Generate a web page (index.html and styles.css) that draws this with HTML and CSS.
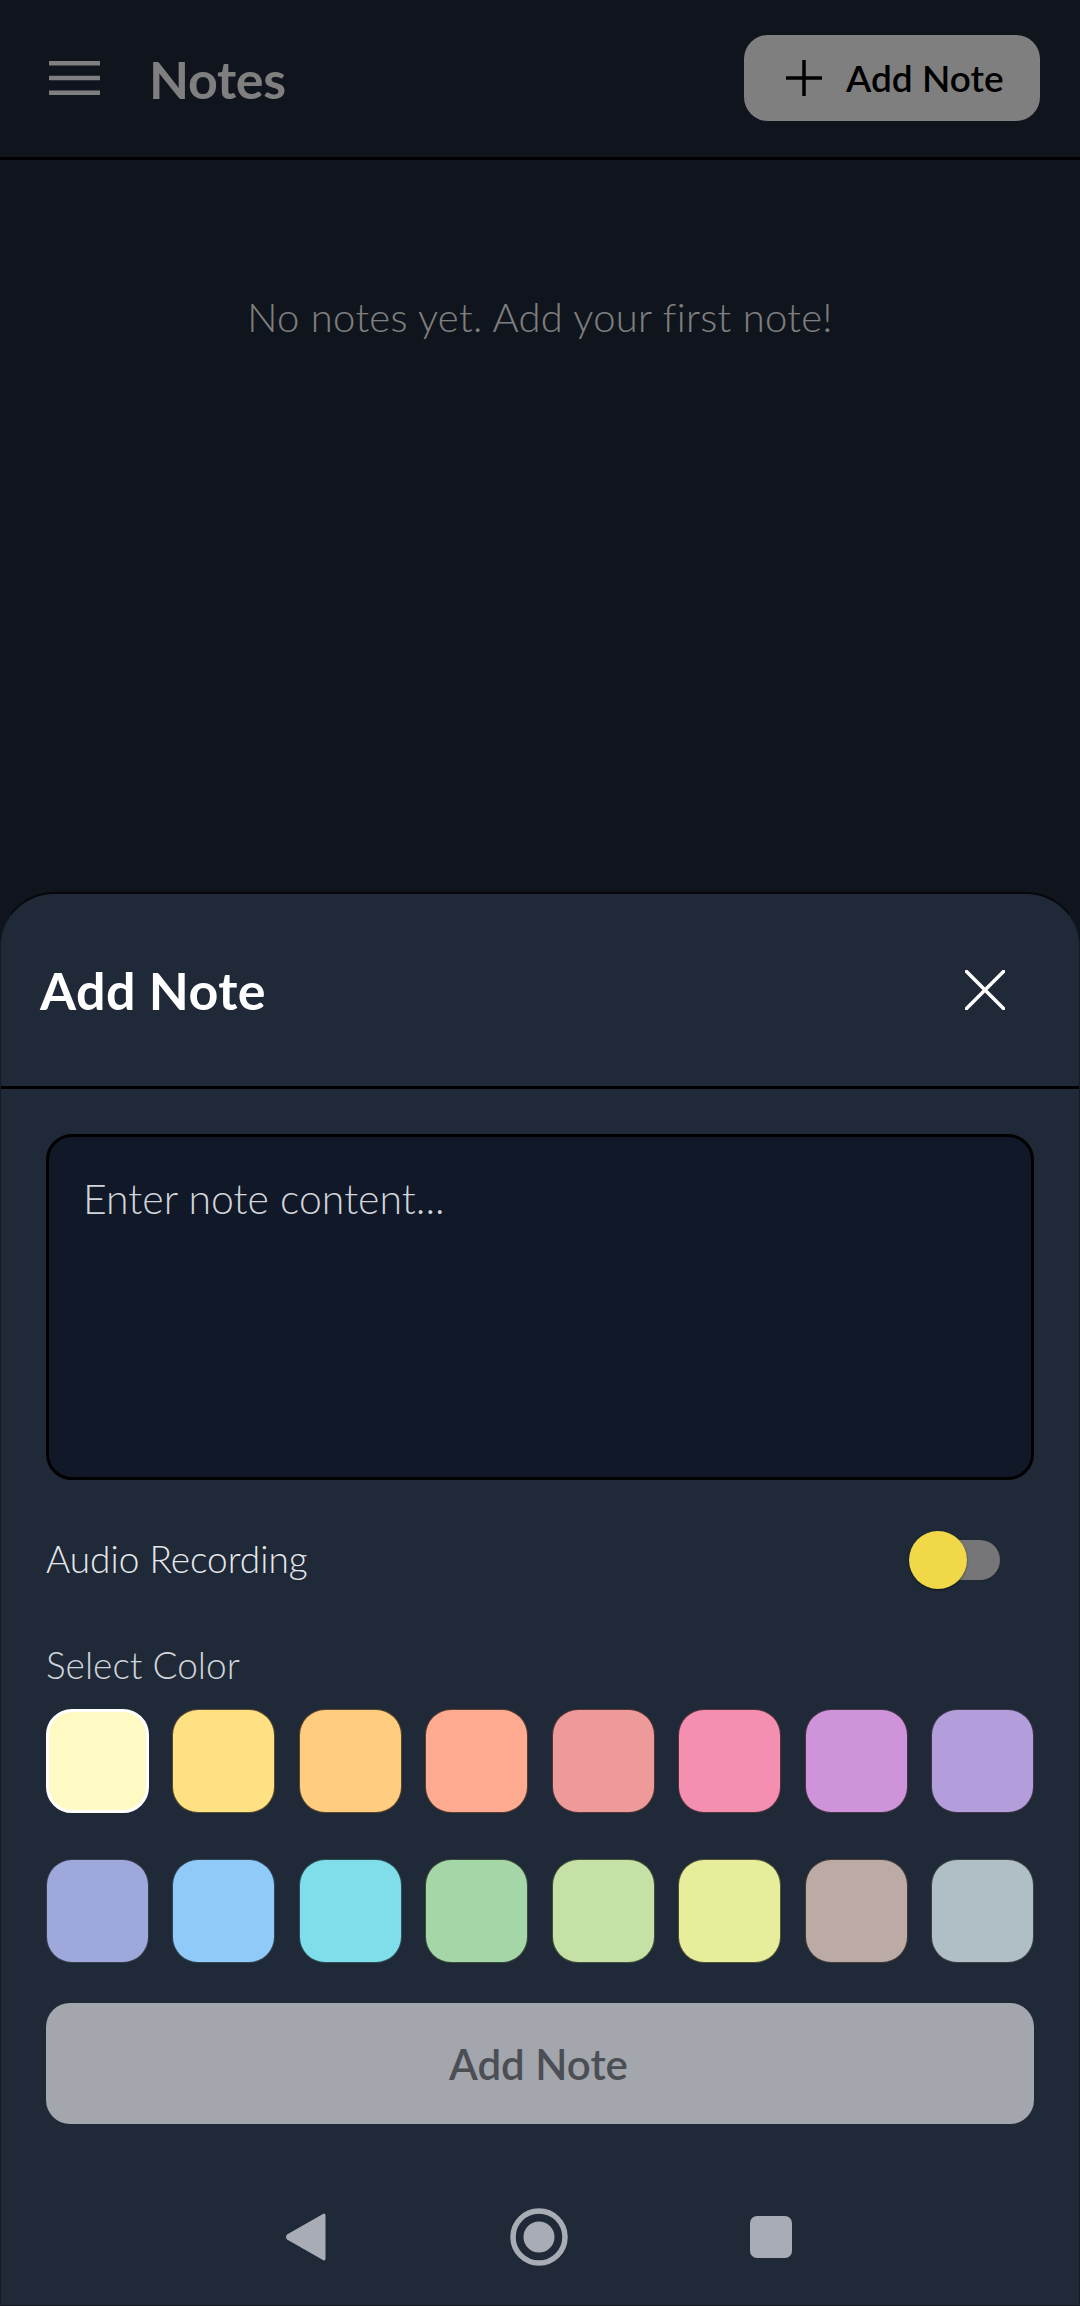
FILE: index.html
```html
<!DOCTYPE html>
<html lang="en">
<head>
<meta charset="utf-8">
<title>Notes</title>
<link rel="stylesheet" href="styles.css">
</head>
<body>
<div class="app">
  <header class="topbar">
    <div class="topbar-left">
      <svg class="menu-icon" viewBox="0 0 52 36" aria-hidden="true"><path d="M0 3h52M0 18h52M0 33h52"/></svg>
      <h1 class="title">Notes</h1>
    </div>
    <button class="add-btn">
      <svg class="plus-icon" viewBox="0 0 36 36" aria-hidden="true"><path d="M18 0v36M0 18h36"/></svg>
      <span>Add Note</span>
    </button>
  </header>
  <main class="empty"><p class="empty-text">No notes yet. Add your first note!</p></main>
  <div class="overlay"></div>
  <section class="sheet">
    <div class="sheet-head">
      <h2 class="sheet-title">Add Note</h2>
      <svg class="close-icon" viewBox="0 0 40 40" aria-hidden="true"><path d="M1.5 1.5l37 37M38.5 1.5l-37 37"/></svg>
    </div>
    <div class="sheet-body">
      <div class="textarea">Enter note content...</div>
      <div class="audio-row">
        <span class="label audio-label">Audio Recording</span>
        <span class="switch"><span class="track"></span><span class="thumb"></span></span>
      </div>
      <div class="label color-label">Select Color</div>
      <div class="swatches">
        <span class="swatch selected c1"></span><span class="swatch c2"></span><span class="swatch c3"></span><span class="swatch c4"></span>
        <span class="swatch c5"></span><span class="swatch c6"></span><span class="swatch c7"></span><span class="swatch c8"></span>
        <span class="swatch c9"></span><span class="swatch c10"></span><span class="swatch c11"></span><span class="swatch c12"></span>
        <span class="swatch c13"></span><span class="swatch c14"></span><span class="swatch c15"></span><span class="swatch c16"></span>
      </div>
      <button class="submit">Add Note</button>
    </div>
    <nav class="navbar">
      <svg class="nav-back" viewBox="0 0 40 48" aria-hidden="true"><path d="M38 0.5c1 0 1.500.8 1.500 2v43c0 1.200-.5 2-1.500 2-.6 0-1-.3-1.500-.8L1 26.500c-1.300-1.500-1.300-3.500 0-5L36.500 1.300c.5-.5.9-.8 1.500-.8z"/></svg>
      <svg class="nav-home" viewBox="0 0 58 58" aria-hidden="true"><circle class="ring" cx="29" cy="29" r="26"/><circle class="dot" cx="29" cy="29" r="15.500"/></svg>
      <span class="nav-square"></span>
    </nav>
  </section>
</div>
</body>
</html>
```
FILE: styles.css
```css
* { box-sizing: border-box; }
html, body { margin: 0; padding: 0; }
body { width: 1080px; height: 2306px; overflow: hidden; background: #202a3a; font-family: "Lato", "Liberation Sans", sans-serif; }
.app { position: relative; width: 1080px; height: 2306px; overflow: hidden; }

.topbar { height: 160px; border-bottom: 3px solid #000; display: flex; align-items: center; justify-content: space-between; padding: 0 40px 0 49px; }
.topbar-left { display: flex; align-items: center; gap: 49px; }
.menu-icon { width: 51px; height: 36px; margin-top: -2px; fill: none; stroke: #fff; stroke-width: 4.500; stroke-linecap: round; }
.title { margin: 0; font-size: 52px; line-height: 60px; font-weight: 700; letter-spacing: -.3px; color: #fff; }
.add-btn { width: 296px; height: 86px; margin-top: -1px; border: 0; border-radius: 24px; background: #fff; color: #000; display: flex; align-items: center; gap: 24px; padding: 0 0 0 42px; font: 600 37px/44px "Lato", sans-serif; }
.plus-icon { width: 36px; height: 36px; fill: none; stroke: #000; stroke-width: 3.500; }
.empty { padding-top: 132px; text-align: center; }
.empty-text { margin: 0; font-size: 40px; line-height: 50px; font-weight: 300; letter-spacing: .3px; color: #fff; }
.overlay { position: absolute; inset: 0; background: rgba(0,0,0,.5); }

.sheet { position: absolute; left: 0; right: 0; top: 892px; bottom: 0; background: #1f2937; border-style: solid; border-width: 2px 1px 1px; border-color: #05070a #141b26 #141b26; border-radius: 54px 54px 0 0; display: flex; flex-direction: column; }
.sheet-head { height: 195px; flex: none; border-bottom: 3px solid #000; display: flex; align-items: center; justify-content: space-between; padding: 0 74px 1px 39px; }
.sheet-title { margin: 0; font-size: 52px; line-height: 60px; font-weight: 700; letter-spacing: .4px; color: #fff; }
.close-icon { width: 40px; height: 40px; fill: none; stroke: #fff; stroke-width: 3.500; stroke-linecap: round; }
.sheet-body { padding: 45px 45px 0; }
.textarea { height: 346px; border: 3px solid #000; border-radius: 26px; background: #111827; padding: 36px 34px; font-size: 41px; line-height: 52px; font-weight: 300; color: #d1d5db; }
.audio-row { height: 160px; display: flex; align-items: center; justify-content: space-between; padding-right: 34px; }
.label { font-size: 37px; line-height: 44px; font-weight: 300; color: #e5e7eb; }
.audio-label { margin-top: -2px; }
.color-label { height: 44px; margin-top: 3px; margin-bottom: 22px; color: #d1d5db; }
.switch { position: relative; width: 91px; height: 58px; display: block; }
.track { position: absolute; left: 24px; right: 0; top: 9px; height: 40px; border-radius: 20px; background: #767577; }
.thumb { position: absolute; left: 0; top: 0; width: 58px; height: 58px; border-radius: 50%; background: #f0d848; box-shadow: 0 1px 2px rgba(0,0,0,.5); }
.swatches { display: grid; grid-template-columns: repeat(8, 103px); justify-content: space-between; row-gap: 46px; }
.swatch { height: 104px; border-radius: 26px; display: block; border: 1.500px solid rgba(0,0,0,.65); }
.swatch.selected { border: 3px solid #fff; }
.c1 { background: #fff9c4; } .c2 { background: #ffe082; } .c3 { background: #ffcc80; } .c4 { background: #ffab91; }
.c5 { background: #ef9a9a; } .c6 { background: #f48fb1; } .c7 { background: #ce93d8; } .c8 { background: #b39ddb; }
.c9 { background: #9fa8da; } .c10 { background: #90caf9; } .c11 { background: #80deea; } .c12 { background: #a5d6a7; }
.c13 { background: #c5e1a5; } .c14 { background: #e6ee9c; } .c15 { background: #bcaaa4; } .c16 { background: #b0bec5; }
.submit { display: block; width: 100%; height: 121px; margin-top: 40px; border: 0; border-radius: 24px; padding: 0 3px 0 0; background: #a3a6ad; color: #4b4f54; font: 600 42px/50px "Lato", sans-serif; }
.navbar { margin-top: 83px; height: 60px; position: relative; display: flex; align-items: center; padding-left: 285px; }
.nav-back { width: 40px; height: 48px; fill: #a8acb4; }
.nav-home { width: 58px; height: 58px; margin-left: 184px; }
.ring { fill: none; stroke: #a8acb4; stroke-width: 5.500; }
.dot { fill: #a8acb4; }
.nav-square { width: 42px; height: 42px; margin-left: 182px; border-radius: 7px; background: #a8acb4; }
```
